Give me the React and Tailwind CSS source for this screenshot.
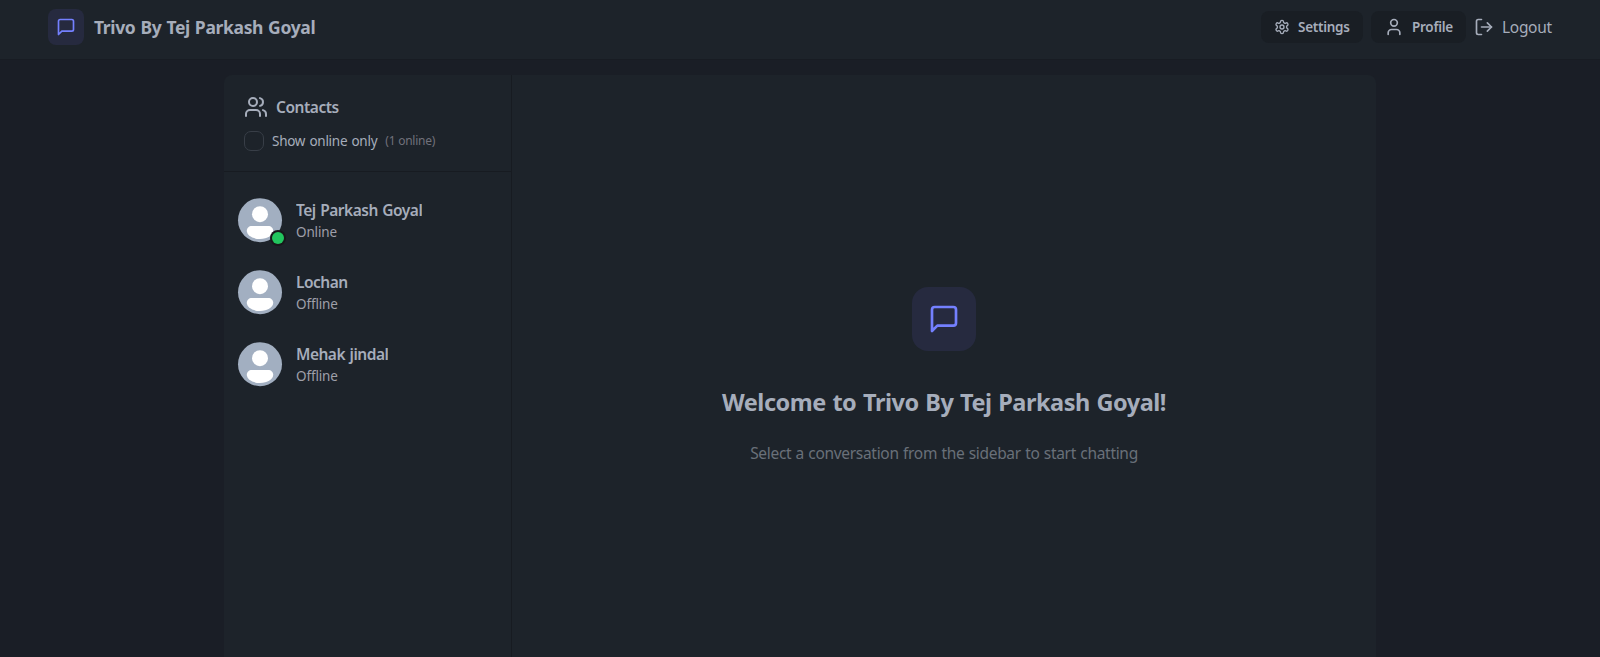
import { LogOut, User, Users } from "lucide-react";

const contacts = [
  { id: 1, name: "Tej Parkash Goyal", online: true },
  { id: 2, name: "Lochan", online: false },
  { id: 3, name: "Mehak jindal", online: false },
];

const MessageIcon = ({ className }) => (
  <svg
    viewBox="0 0 24 24"
    fill="none"
    stroke="currentColor"
    strokeWidth="2"
    strokeLinecap="round"
    strokeLinejoin="round"
    className={className}
  >
    <path d="M21 15a2 2 0 0 1-2 2H7l-4 4V5a2 2 0 0 1 2-2h14a2 2 0 0 1 2 2z" />
  </svg>
);

const GearIcon = ({ className }) => (
  <svg
    viewBox="0 0 24 24"
    fill="none"
    stroke="currentColor"
    strokeWidth="2"
    strokeLinecap="round"
    strokeLinejoin="round"
    className={className}
  >
    <path d="M12.22 2h-.44a2 2 0 0 0-2 2v.18a2 2 0 0 1-1 1.73l-.43.25a2 2 0 0 1-2 0l-.15-.08a2 2 0 0 0-2.73.73l-.22.38a2 2 0 0 0 .73 2.73l.15.1a2 2 0 0 1 1 1.72v.51a2 2 0 0 1-1 1.74l-.15.09a2 2 0 0 0-.73 2.73l.22.38a2 2 0 0 0 2.73.73l.15-.08a2 2 0 0 1 2 0l.43.25a2 2 0 0 1 1 1.73V20a2 2 0 0 0 2 2h.44a2 2 0 0 0 2-2v-.18a2 2 0 0 1 1-1.73l.43-.25a2 2 0 0 1 2 0l.15.08a2 2 0 0 0 2.73-.73l.22-.39a2 2 0 0 0-.73-2.73l-.15-.08a2 2 0 0 1-1-1.74v-.5a2 2 0 0 1 1-1.74l.15-.09a2 2 0 0 0 .73-2.73l-.22-.38a2 2 0 0 0-2.73-.73l-.15.08a2 2 0 0 1-2 0l-.43-.25a2 2 0 0 1-1-1.73V4a2 2 0 0 0-2-2z" />
    <circle cx="12" cy="12" r="3" />
  </svg>
);

const Avatar = ({ online }) => (
  <div className="relative size-12 shrink-0">
    <svg viewBox="0 0 48 48" className="size-12">
      <circle cx="24" cy="24.2" r="22" fill="#a2afc1" />
      <circle cx="24" cy="18.2" r="8" fill="#fff" />
      <path
        d="M15.800 30h16.400c2.900 0 5 2.100 5 4.800 0 4.500-5.700 8.200-13.200 8.200s-13.200-3.700-13.200-8.200c0-2.700 2.100-4.800 5-4.800z"
        fill="#fff"
      />
    </svg>
    {online && (
      <span className="absolute bottom-0 right-0 size-3 rounded-full bg-[#22c55e] ring-2 ring-zinc-900" />
    )}
  </div>
);

const Navbar = () => (
  <header className="h-[60px] shrink-0 border-b border-[#181c23] bg-[#1d232a] px-12">
    <div className="flex h-[54px] items-center justify-between">
      <div className="flex items-center gap-2.5">
        <div className="flex size-9 items-center justify-center rounded-lg bg-[#262a3f]">
          <MessageIcon className="size-5 text-[#7480ff]" />
        </div>
        <h1 className="text-[17.5px] font-bold tracking-[-0.02em] [word-spacing:0.8px]">
          Trivo By Tej Parkash Goyal
        </h1>
      </div>

      <div className="flex items-center gap-2">
        <button className="flex h-8 w-[102px] items-center gap-2 rounded-lg bg-[#191e24] px-[13px]">
          <GearIcon className="size-4 shrink-0" />
          <span className="text-[13.5px] font-semibold tracking-[-0.02em]">Settings</span>
        </button>
        <button className="flex h-8 w-[95px] items-center gap-2 rounded-lg bg-[#191e24] px-[13px]">
          <User className="size-5 shrink-0" />
          <span className="text-[13.5px] font-semibold tracking-[-0.02em]">Profile</span>
        </button>
        <button className="flex w-[78px] items-center gap-2">
          <LogOut className="size-5 shrink-0" />
          <span className="pt-0.5 text-[15.5px] tracking-[-0.02em]">Logout</span>
        </button>
      </div>
    </div>
  </header>
);

const Sidebar = () => (
  <aside className="flex w-72 shrink-0 flex-col border-r border-[#171b21]">
    <div className="border-b border-[#171b21] p-5">
      <div className="flex items-center gap-2">
        <Users className="size-6" />
        <span className="text-[15.5px] leading-6 font-semibold tracking-[-0.03em]">Contacts</span>
      </div>
      <div className="mt-3 flex items-center gap-2">
        <span className="size-5 rounded-[7px] border border-[#383e47]" />
        <span className="text-[13.5px] leading-5 tracking-[-0.02em] [word-spacing:1px]">
          Show online only
        </span>
        <span className="text-[12px] leading-5 tracking-[-0.02em] text-zinc-500">(1 online)</span>
      </div>
    </div>

    <div className="py-3">
      {contacts.map((contact) => (
        <button key={contact.id} className="flex w-full items-center gap-3 p-3 text-left">
          <Avatar online={contact.online} />
          <div className="min-w-0">
            <div className="truncate text-[15.5px] leading-6 font-semibold tracking-[-0.032em] [word-spacing:1px]">
              {contact.name}
            </div>
            <div className="text-[13.5px] leading-5 tracking-[-0.01em] text-zinc-400">
              {contact.online ? "Online" : "Offline"}
            </div>
          </div>
        </button>
      ))}
    </div>
  </aside>
);

const NoChatSelected = () => (
  <section className="flex flex-1 flex-col items-center pt-[212px]">
    <div className="flex size-16 items-center justify-center rounded-2xl bg-[#262a3f]">
      <MessageIcon className="size-8 text-[#7480ff]" />
    </div>
    <h2 className="mt-[35px] text-[23.5px] leading-8 font-bold tracking-[-0.02em] [word-spacing:1px]">
      Welcome to Trivo By Tej Parkash Goyal!
    </h2>
    <p className="mt-[23px] text-[15.5px] leading-6 tracking-[-0.02em] text-[#697079] [word-spacing:0.6px]">
      Select a conversation from the sidebar to start chatting
    </p>
  </section>
);

const App = () => {
  return (
    <div className="flex h-screen flex-col overflow-hidden bg-[#1a1e26] font-['Noto_Sans','Open_Sans',sans-serif] text-[#a6adbb]">
      <Navbar />
      <main className="mx-auto mt-[15px] flex w-full max-w-6xl flex-1 overflow-hidden rounded-t-lg bg-[#1d232a]">
        <Sidebar />
        <NoChatSelected />
      </main>
    </div>
  );
};

export default App;
